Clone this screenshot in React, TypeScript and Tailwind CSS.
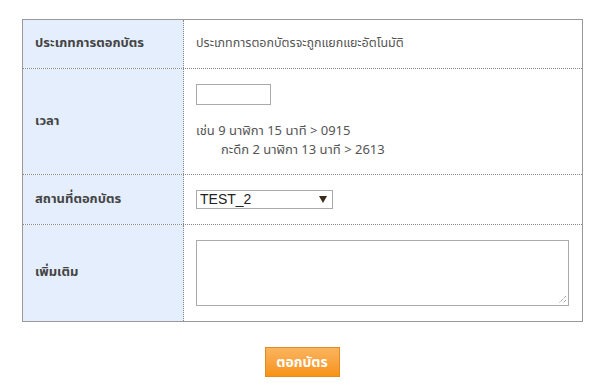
import React from "react";

const thai = { fontFamily: "Tahoma, 'Noto Sans Thai', 'Noto Sans', 'DejaVu Sans', sans-serif" };

function Label({ children, h }: { children: React.ReactNode; h: string }) {
  return (
    <div className={`flex items-center bg-[#e4eefd] border-r border-dotted border-[#888] pl-[12px] text-[13px] font-bold text-[#444] ${h}`}>
      {children}
    </div>
  );
}

export default function App() {
  return (
    <div className="w-[604px] h-[389px] bg-white" style={thai}>
      <div className="pt-[19px] pl-[22px]">
        <div className="w-[561px] border border-[#999] grid grid-cols-[161px_1fr]">
          <Label h="h-[48px]">ประเภทการตอกบัตร</Label>
          <div className="flex items-center pl-[12px] text-[12.5px] text-[#555]">
            ประเภทการตอกบัตรจะถูกแยกแยะอัตโนมัติ
          </div>

          <div className="col-span-2 border-t border-dotted border-[#888]" />

          <Label h="h-[105px]">เวลา</Label>
          <div className="pl-[12px] pt-[15px] text-[13px] text-[#555]">
            <div className="w-[75px] h-[21px] border border-[#aaa] bg-white" />
            <div className="mt-[17px] leading-[19px]">
              <div>เช่น 9 นาฬิกา 15 นาที &gt; 0915</div>
              <div className="pl-[25px]">กะดึก 2 นาฬิกา 13 นาที &gt; 2613</div>
            </div>
          </div>

          <div className="col-span-2 border-t border-dotted border-[#888]" />

          <Label h="h-[49px]">สถานที่ตอกบัตร</Label>
          <div className="flex items-center pl-[12px]">
            <div className="w-[137px] h-[19px] border border-[#aaa] flex items-center justify-between pl-[3px] pr-[5px] text-[14px] text-[#222]" style={{ fontFamily: "'Liberation Sans', Arial, sans-serif" }}>
              <span>TEST_2</span>
              <svg width="8" height="7" viewBox="0 0 8 7">
                <polygon points="0,0 8,0 4,7" fill="#3a2a1a" />
              </svg>
            </div>
          </div>

          <div className="col-span-2 border-t border-dotted border-[#888]" />

          <Label h="h-[96px]">เพิ่มเติม</Label>
          <div className="pl-[12px] pt-[15px]">
            <div className="relative w-[373px] h-[66px] border border-[#aaa] bg-white">
              <svg className="absolute right-[1px] bottom-[1px]" width="9" height="9" viewBox="0 0 9 9">
                <line x1="8" y1="1" x2="1" y2="8" stroke="#777" strokeWidth="1" strokeDasharray="1 1" />
                <line x1="8" y1="5" x2="5" y2="8" stroke="#777" strokeWidth="1" strokeDasharray="1 1" />
              </svg>
            </div>
          </div>
        </div>
      </div>
      <div className="flex justify-center pt-[25px]">
        <button className="w-[75px] h-[30px] border border-[#e08c22] bg-gradient-to-b from-[#fbb45c] to-[#f7920f] text-white font-bold text-[14px]">
          ตอกบัตร
        </button>
      </div>
    </div>
  );
}
